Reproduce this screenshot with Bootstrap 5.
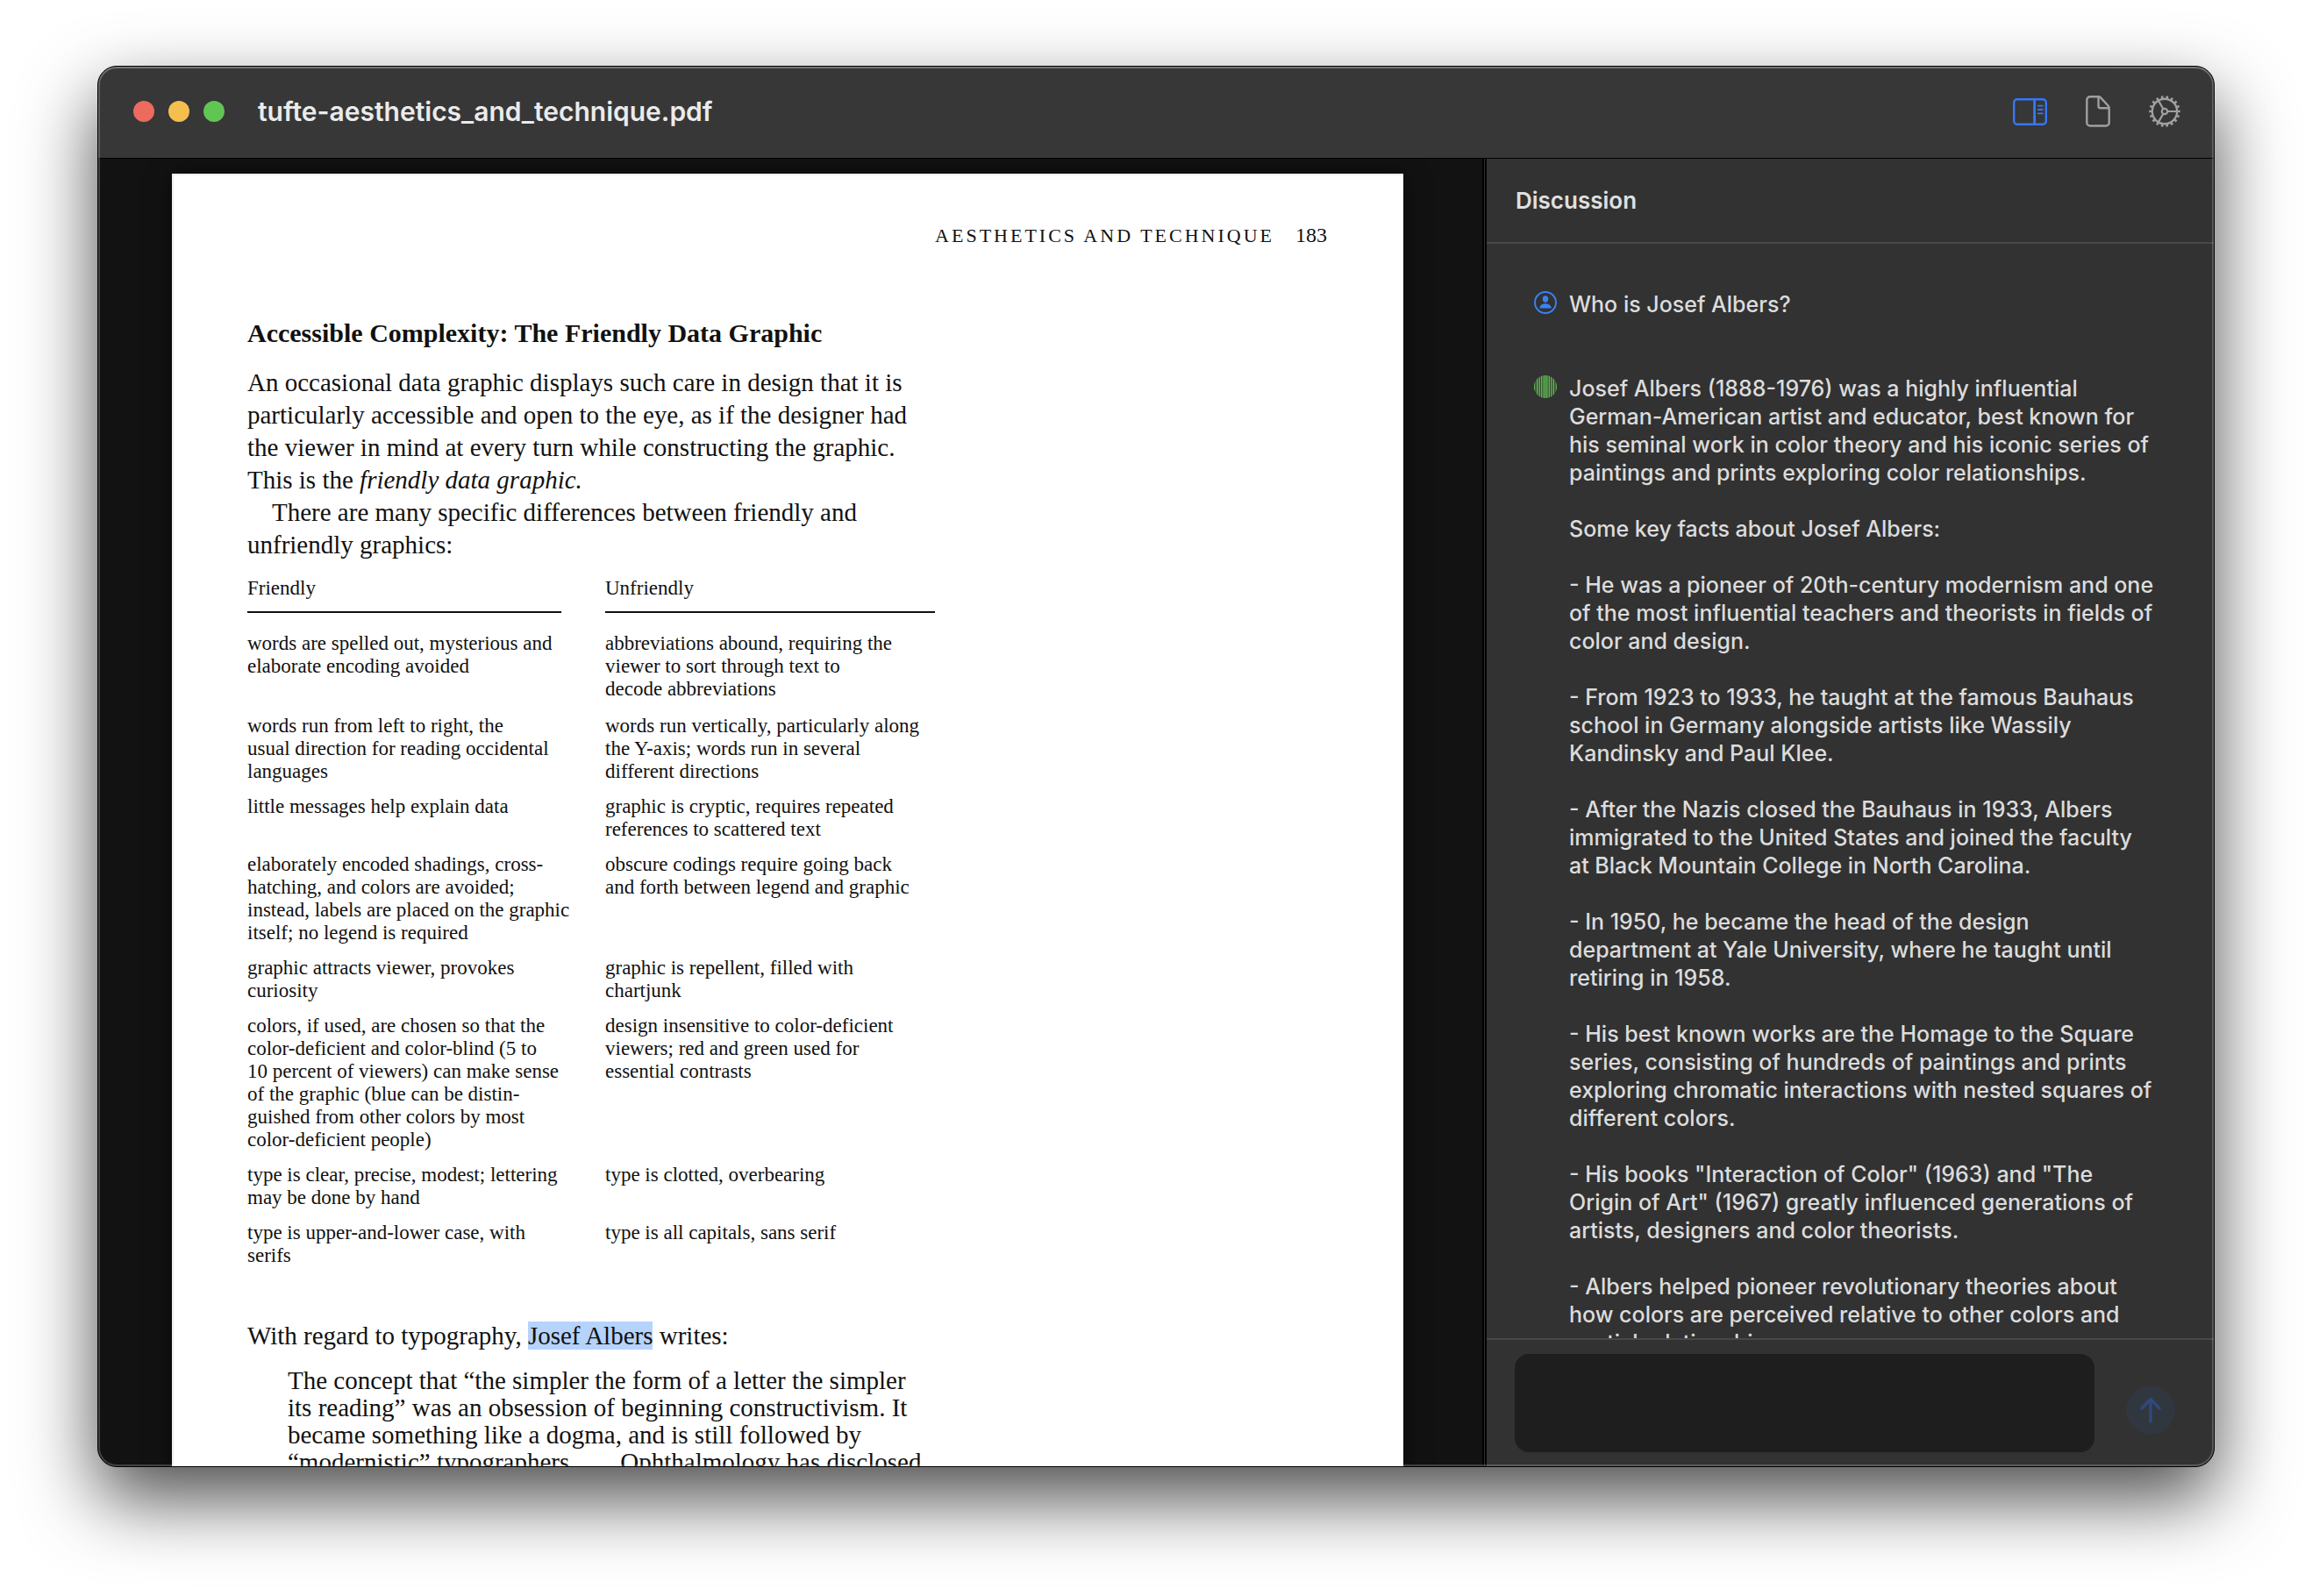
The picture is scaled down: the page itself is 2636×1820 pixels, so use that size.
<!DOCTYPE html>
<html lang="en">
<head>
<meta charset="utf-8">
<meta name="viewport" content="width=device-width, initial-scale=1">
<title>tufte-aesthetics_and_technique.pdf</title>
<link href="https://cdn.jsdelivr.net/npm/bootstrap@5.3.0/dist/css/bootstrap.min.css" rel="stylesheet">
<style>
  body { background: #fff; font-family: Inter, "Liberation Sans", sans-serif; }
  .desk { height: 100vh; padding: 75px 111px 147px; }
  .app-window {
    border: 1px solid #000; border-radius: 22px; background: #323232; color: #e0e0e0;
    box-shadow: 0 36px 84px rgba(0, 0, 0, .7);
  }
  /* light rim that runs inside the window edge */
  .app-window::after {
    content: ""; position: absolute; inset: 0; border-radius: 21px; pointer-events: none;
    box-shadow: inset 0 0 0 2px rgba(255, 255, 255, .2), inset 0 2px 0 rgba(255, 255, 255, .14);
  }
  .title-bar { height: 105px; padding: 0 38px 2px 40px; background: #373737; border-bottom: 1px solid #000; }
  .light { width: 24px; height: 24px; border-radius: 50%; }
  .light-close { background: #ed6a5e; }
  .light-min { background: #f5bf4f; }
  .light-zoom { background: #61c554; }
  .file-name { margin-left: 38px; font-size: 30px; line-height: 36px; font-weight: 600; color: #ebebeb; }
  .tools { gap: 44px; }
  .tool { color: #a0a0a0; }
  .tool-active { color: #3478f6; }

  .viewer { background: #121212; padding: 17px 90px 0 84px; }
  .sheet {
    background: #fff; color: #111; padding: 54px 87px 0 84px; border: solid #efefef; border-width: 2px 0 0 2px;
    box-shadow: 0 0 24px rgba(0, 0, 0, .5);
    font-family: "Liberation Serif", "Times New Roman", serif; font-size: 29px; line-height: 37px; white-space: nowrap;
  }
  .running-head { font-size: 22px; line-height: 28px; letter-spacing: 3px; gap: 24px; margin-bottom: 78px; }
  .folio { font-size: 24px; letter-spacing: 0; }
  .sheet h1 { font-size: 30px; line-height: 37px; font-weight: 700; margin-bottom: 20px; }
  .indent { padding-left: 28px; }
  .compare { font-size: 23px; line-height: 26px; margin: 18px 0 46px; }
  .compare th, .compare td { padding: 0 0 14px; vertical-align: top; }
  .compare th { padding-bottom: 22px; font-weight: 400; }
  .compare th:first-child, .compare td:first-child { width: 408px; }
  .compare tbody tr:first-child td { padding-bottom: 16px; }
  .head-rule { border-bottom: 2px solid #111; padding-bottom: 13px; margin-right: 50px; }
  .compare th:last-child .head-rule { margin-right: 0; width: 376px; }
  .selected { background: #b6d3fb; }
  .extract { margin: 17px 0 0 46px; line-height: 31px; }

  .divider { width: 5px; background: #303030; border: solid #000; border-width: 0 2px; }
  .sidebar { width: 829px; }
  .side-head { height: 97px; padding: 0 33px; border-bottom: 2px solid #484848; }
  .side-head h2 { font-size: 26px; line-height: 32px; font-weight: 600; }
  .thread { padding: 53px 54px 0; gap: 64px; font-size: 25px; line-height: 32px; font-weight: 500; color: #dcdcdc; white-space: nowrap; }
  .thread p { margin-bottom: 32px; }
  .thread p:last-child { margin-bottom: 0; }
  .message { gap: 14px; }
  .avatar { width: 26px; height: 26px; margin-top: 1px; }
  .composer { padding: 16px 44px 16px 32px; gap: 36px; border-top: 2px solid #484848; }
  .composer textarea, .composer textarea:focus {
    height: 112px; border: 0; border-radius: 16px; background: #1e1e1e; color: #e0e0e0; resize: none; box-shadow: none;
    font-size: 25px; line-height: 32px;
  }
  .send { width: 56px; height: 56px; margin-bottom: 20px; border-radius: 50%; background: #31373f; }
</style>
<script src="https://cdn.jsdelivr.net/npm/bootstrap@5.3.0/dist/js/bootstrap.bundle.min.js"></script>
</head>
<body>
<div class="desk d-flex overflow-hidden">
<div class="app-window position-relative flex-grow-1 d-flex flex-column overflow-hidden">

  <header class="title-bar d-flex align-items-center flex-shrink-0">
    <div class="d-flex gap-3">
      <button type="button" class="light light-close border-0 p-0" aria-label="Close"></button>
      <button type="button" class="light light-min border-0 p-0" aria-label="Minimize"></button>
      <button type="button" class="light light-zoom border-0 p-0" aria-label="Zoom"></button>
    </div>
    <div class="file-name">tufte-aesthetics_and_technique.pdf</div>
    <div class="tools d-flex align-items-center ms-auto">
      <button type="button" class="tool-active btn p-0 border-0 d-flex" aria-label="Sidebar">
        <svg width="39" height="31" viewBox="0 0 39 31" fill="none" stroke="currentColor" stroke-width="2.4">
          <rect x="1.2" y="1.2" width="36.6" height="28.6" rx="3.6"/>
          <path d="M24.6 1v29" stroke-width="2.8"/>
          <path d="M28.8 8.6h5M28.8 13h5M28.8 17.4h5" stroke-width="1.8" stroke-linecap="round"/>
        </svg>
      </button>
      <button type="button" class="tool btn p-0 border-0 d-flex" aria-label="Document">
        <svg width="28" height="36" viewBox="0 0 28 36" fill="none" stroke="currentColor" stroke-width="2.4" stroke-linejoin="round">
          <path d="M5 1.3h9.6a3 3 0 0 1 2.2.9l9 9.600a3 3 0 0 1 .9 2.200v16.800a3.700 3.700 0 0 1-3.700 3.700H5a3.700 3.700 0 0 1-3.700-3.700V5A3.700 3.700 0 0 1 5 1.300z"/>
          <path d="M14.500 1.800v10.200a2.200 2.200 0 0 0 2.200 2.200h9.800"/>
        </svg>
      </button>
      <button type="button" class="tool btn p-0 border-0 d-flex" aria-label="Settings">
        <svg width="36" height="36" viewBox="0 0 36 36" fill="none" stroke="currentColor">
          <circle cx="18" cy="18" r="14.200" stroke-width="2.400"/>
          <circle cx="18" cy="18" r="16.300" stroke-width="3" pathLength="36" stroke-dasharray=".9 1.100" stroke-dashoffset=".45"/>
          <circle cx="18" cy="18" r="3.200" stroke-width="2.200"/>
          <path d="M21.500 18h10.500M16.250 14.970L11 5.870M16.250 21.030L11 30.130" stroke-width="2.200"/>
        </svg>
      </button>
    </div>
  </header>

  <div class="d-flex flex-grow-1 overflow-hidden">
    <main class="viewer flex-grow-1 overflow-hidden">
      <article class="sheet">
        <div class="running-head d-flex justify-content-end align-items-baseline">
          <span>AESTHETICS AND TECHNIQUE</span><span class="folio">183</span>
        </div>
        <h1>Accessible Complexity: The Friendly Data Graphic</h1>
        <p class="mb-0">An occasional data graphic displays such care in design that it is<br>
          particularly accessible and open to the eye, as if the designer had<br>
          the viewer in mind at every turn while constructing the graphic.<br>
          This is the <i>friendly data graphic.</i></p>
        <p class="mb-0"><span class="indent">There are many specific differences between friendly and</span><br>
          unfriendly graphics:</p>

        <table class="compare">
          <thead>
            <tr><th scope="col"><div class="head-rule">Friendly</div></th><th scope="col"><div class="head-rule">Unfriendly</div></th></tr>
          </thead>
          <tbody>
            <tr><td>words are spelled out, mysterious and<br>elaborate encoding avoided</td>
                <td>abbreviations abound, requiring the<br>viewer to sort through text to<br>decode abbreviations</td></tr>
            <tr><td>words run from left to right, the<br>usual direction for reading occidental<br>languages</td>
                <td>words run vertically, particularly along<br>the Y-axis; words run in several<br>different directions</td></tr>
            <tr><td>little messages help explain data</td>
                <td>graphic is cryptic, requires repeated<br>references to scattered text</td></tr>
            <tr><td>elaborately encoded shadings, cross-<br>hatching, and colors are avoided;<br>instead, labels are placed on the graphic<br>itself; no legend is required</td>
                <td>obscure codings require going back<br>and forth between legend and graphic</td></tr>
            <tr><td>graphic attracts viewer, provokes<br>curiosity</td>
                <td>graphic is repellent, filled with<br>chartjunk</td></tr>
            <tr><td>colors, if used, are chosen so that the<br>color-deficient and color-blind (5 to<br>10 percent of viewers) can make sense<br>of the graphic (blue can be distin-<br>guished from other colors by most<br>color-deficient people)</td>
                <td>design insensitive to color-deficient<br>viewers; red and green used for<br>essential contrasts</td></tr>
            <tr><td>type is clear, precise, modest; lettering<br>may be done by hand</td>
                <td>type is clotted, overbearing</td></tr>
            <tr><td>type is upper-and-lower case, with<br>serifs</td>
                <td>type is all capitals, sans serif</td></tr>
          </tbody>
        </table>

        <p class="mb-0">With regard to typography, <span class="selected">Josef Albers</span> writes:</p>
        <blockquote class="extract">The concept that “the simpler the form of a letter the simpler<br>
          its reading” was an obsession of beginning constructivism. It<br>
          became something like a dogma, and is still followed by<br>
          “modernistic” typographers. . . . Ophthalmology has disclosed</blockquote>
      </article>
    </main>

    <div class="divider flex-shrink-0"></div>

    <aside class="sidebar flex-shrink-0 d-flex flex-column">
      <div class="side-head d-flex align-items-center flex-shrink-0"><h2 class="mb-0">Discussion</h2></div>

      <div class="thread d-flex flex-column flex-grow-1 overflow-hidden">
        <div class="message d-flex align-items-start flex-shrink-0">
          <svg class="avatar flex-shrink-0" viewBox="0 0 26 26">
            <circle cx="13" cy="13" r="12" fill="none" stroke="#3b82f7" stroke-width="1.900"/>
            <ellipse cx="13" cy="9" rx="3.200" ry="3.700" fill="#3b82f7"/>
            <path d="M6.300 19.600c0-3.300 3-5.400 6.700-5.400s6.700 2.100 6.700 5.400z" fill="#3b82f7"/>
          </svg>
          <p>Who is Josef Albers?</p>
        </div>
        <div class="message d-flex align-items-start flex-shrink-0">
          <svg class="avatar flex-shrink-0" viewBox="0 0 26 26">
            <defs><clipPath id="disc"><circle cx="13" cy="13" r="13"/></clipPath></defs>
            <g clip-path="url(#disc)">
              <rect width="26" height="26" fill="#35482f"/>
              <path d="M.7 0v26M3.600 0v26M6.200 0v26M8.700 0v26M11.100 0v26M13 0v26M14.900 0v26M17.300 0v26M19.800 0v26M22.400 0v26M25.300 0v26" stroke="#61c554" stroke-width="1.200"/>
            </g>
          </svg>
          <div>
            <p>Josef Albers (1888-1976) was a highly influential<br>German-American artist and educator, best known for<br>his seminal work in color theory and his iconic series of<br>paintings and prints exploring color relationships.</p>
            <p>Some key facts about Josef Albers:</p>
            <p>- He was a pioneer of 20th-century modernism and one<br>of the most influential teachers and theorists in fields of<br>color and design.</p>
            <p>- From 1923 to 1933, he taught at the famous Bauhaus<br>school in Germany alongside artists like Wassily<br>Kandinsky and Paul Klee.</p>
            <p>- After the Nazis closed the Bauhaus in 1933, Albers<br>immigrated to the United States and joined the faculty<br>at Black Mountain College in North Carolina.</p>
            <p>- In 1950, he became the head of the design<br>department at Yale University, where he taught until<br>retiring in 1958.</p>
            <p>- His best known works are the Homage to the Square<br>series, consisting of hundreds of paintings and prints<br>exploring chromatic interactions with nested squares of<br>different colors.</p>
            <p>- His books "Interaction of Color" (1963) and "The<br>Origin of Art" (1967) greatly influenced generations of<br>artists, designers and color theorists.</p>
            <p>- Albers helped pioneer revolutionary theories about<br>how colors are perceived relative to other colors and<br>spatial relationships.</p>
          </div>
        </div>
      </div>

      <form class="composer d-flex align-items-end flex-shrink-0">
        <label for="reply" class="visually-hidden">Message</label>
        <textarea id="reply" class="form-control"></textarea>
        <button type="button" class="send btn p-0 border-0 flex-shrink-0 d-flex align-items-center justify-content-center" aria-label="Send">
          <svg width="24" height="30" viewBox="0 0 24 30" fill="none" stroke="#2e4a7c" stroke-width="3.400" stroke-linecap="round" stroke-linejoin="round">
            <path d="M12 28V2.500M2 13L12 2.500L22 13"/>
          </svg>
        </button>
      </form>
    </aside>
  </div>
</div>
</div>
</body>
</html>
